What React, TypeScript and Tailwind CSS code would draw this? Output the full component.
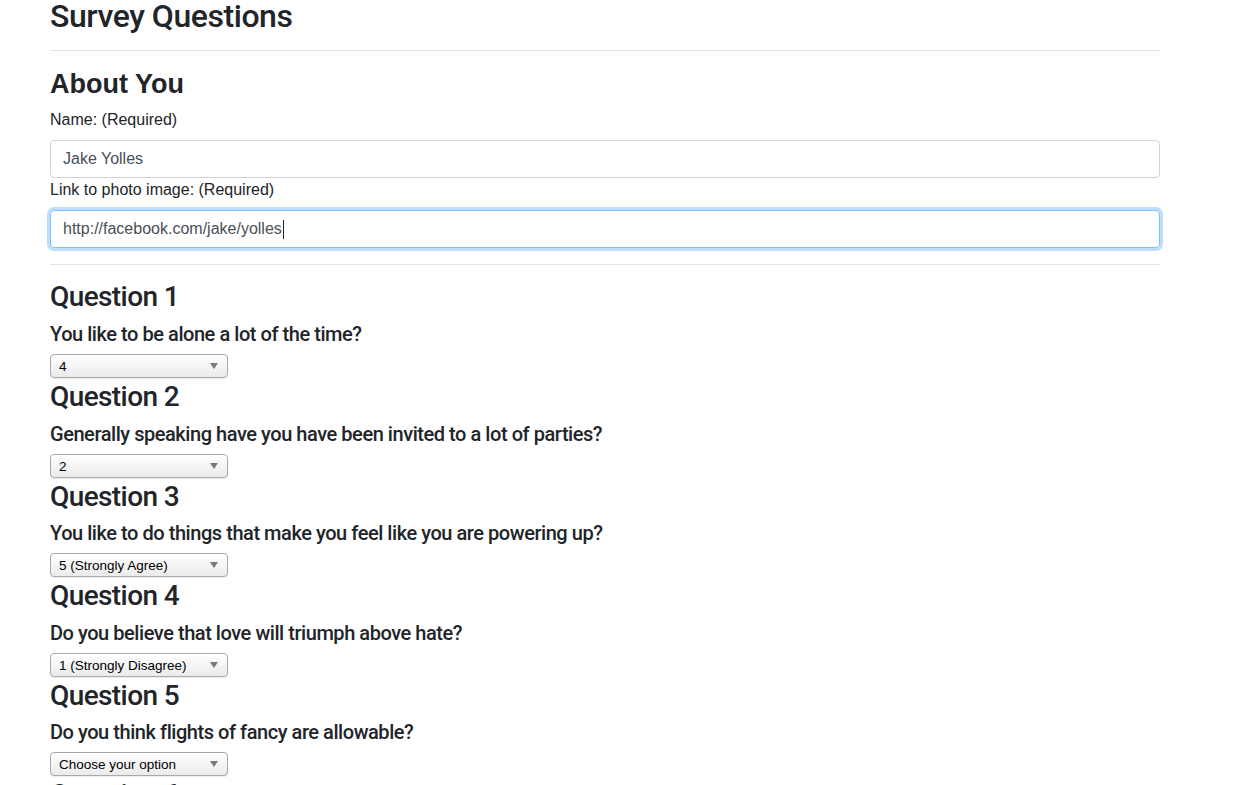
import { useState } from 'react';

const questions = [
  { title: 'Question 1', text: 'You like to be alone a lot of the time?', value: '4' },
  { title: 'Question 2', text: 'Generally speaking have you have been invited to a lot of parties?', value: '2' },
  { title: 'Question 3', text: 'You like to do things that make you feel like you are powering up?', value: '5' },
  { title: 'Question 4', text: 'Do you believe that love will triumph above hate?', value: '1' },
  { title: 'Question 5', text: 'Do you think flights of fancy are allowable?', value: '' },
  { title: 'Question 6', text: 'You would rather stay in than go out on a Friday night?', value: '' },
  { title: 'Question 7', text: 'Do you enjoy meeting new people?', value: '' },
];

const options = [
  { value: '', label: 'Choose your option' },
  { value: '1', label: '1 (Strongly Disagree)' },
  { value: '2', label: '2' },
  { value: '3', label: '3' },
  { value: '4', label: '4' },
  { value: '5', label: '5 (Strongly Agree)' },
];

function Dropdown({ initial }: { initial: string }) {
  const [value, setValue] = useState(initial);
  return (
    <div className="h-[26px]">
      <div className="relative h-[24px] w-[178px]">
        <select
          value={value}
          onChange={(e) => setValue(e.target.value)}
          className="h-[24px] w-[178px] appearance-none rounded-[4px] border border-[#a9a9a9] bg-linear-to-b from-white to-[#ebebeb] pt-[2px] pl-[8px] pr-6 text-[13.5px] leading-[20px] text-black shadow-[0_1px_1px_rgba(0,0,0,0.08)] outline-none"
        >
          {options.map((o) => (
            <option key={o.value} value={o.value}>
              {o.label}
            </option>
          ))}
        </select>
        <svg className="pointer-events-none absolute right-[10px] top-[9px]" width="8" height="6" viewBox="0 0 8 6">
          <path d="M0 0 H8 L4 6 Z" fill="#7a7a7a" />
        </svg>
      </div>
    </div>
  );
}

export default function App() {
  return (
    <div className="min-h-screen bg-white font-['Liberation_Sans','Helvetica_Neue',Arial,sans-serif] text-[#212529]">
      <div className="ml-[50px] w-[1110px]">
        <h2 className="font-['Roboto',sans-serif] text-[32px] leading-[32px] font-medium tracking-[-0.45px]">Survey Questions</h2>
        <hr className="mt-[18px] border-0 border-t border-[#e3e3e3]" />

        <h3 className="mt-[17px] mb-2 text-[27px] leading-[1.2] font-bold">About You</h3>
        <label className="mb-2 block text-base leading-6">Name: (Required)</label>
        <input
          defaultValue="Jake Yolles"
          className="block h-[38px] w-full rounded-[4px] border border-[#ced4da] px-3 text-base text-[#495057] outline-none"
        />
        <label className="mb-2 block text-base leading-6">Link to photo image: (Required)</label>
        <div className="flex h-[38px] w-full items-center rounded-[4px] border border-[#80bdff] px-3 text-base text-[#495057] shadow-[0_0_0_3px_rgba(0,123,255,0.25)]">
          <span>http://facebook.com/jake/yolles</span>
          <span className="ml-px inline-block h-[19px] w-px bg-[#212529]" />
        </div>

        <hr className="mt-4 border-0 border-t border-[#e3e3e3]" />

        <div className="mt-[15px] font-['Roboto',sans-serif]">
          {questions.map((q) => (
            <div key={q.title}>
              <h3 className="mb-2 text-[28px] leading-[1.2] font-medium tracking-[-0.6px]">{q.title}</h3>
              <h5 className="mb-2 text-[20px] leading-6 font-medium tracking-[-0.45px]">{q.text}</h5>
              <div className="font-['Liberation_Sans',Arial,sans-serif]">
                <Dropdown initial={q.value} />
              </div>
            </div>
          ))}
        </div>
      </div>
    </div>
  );
}
